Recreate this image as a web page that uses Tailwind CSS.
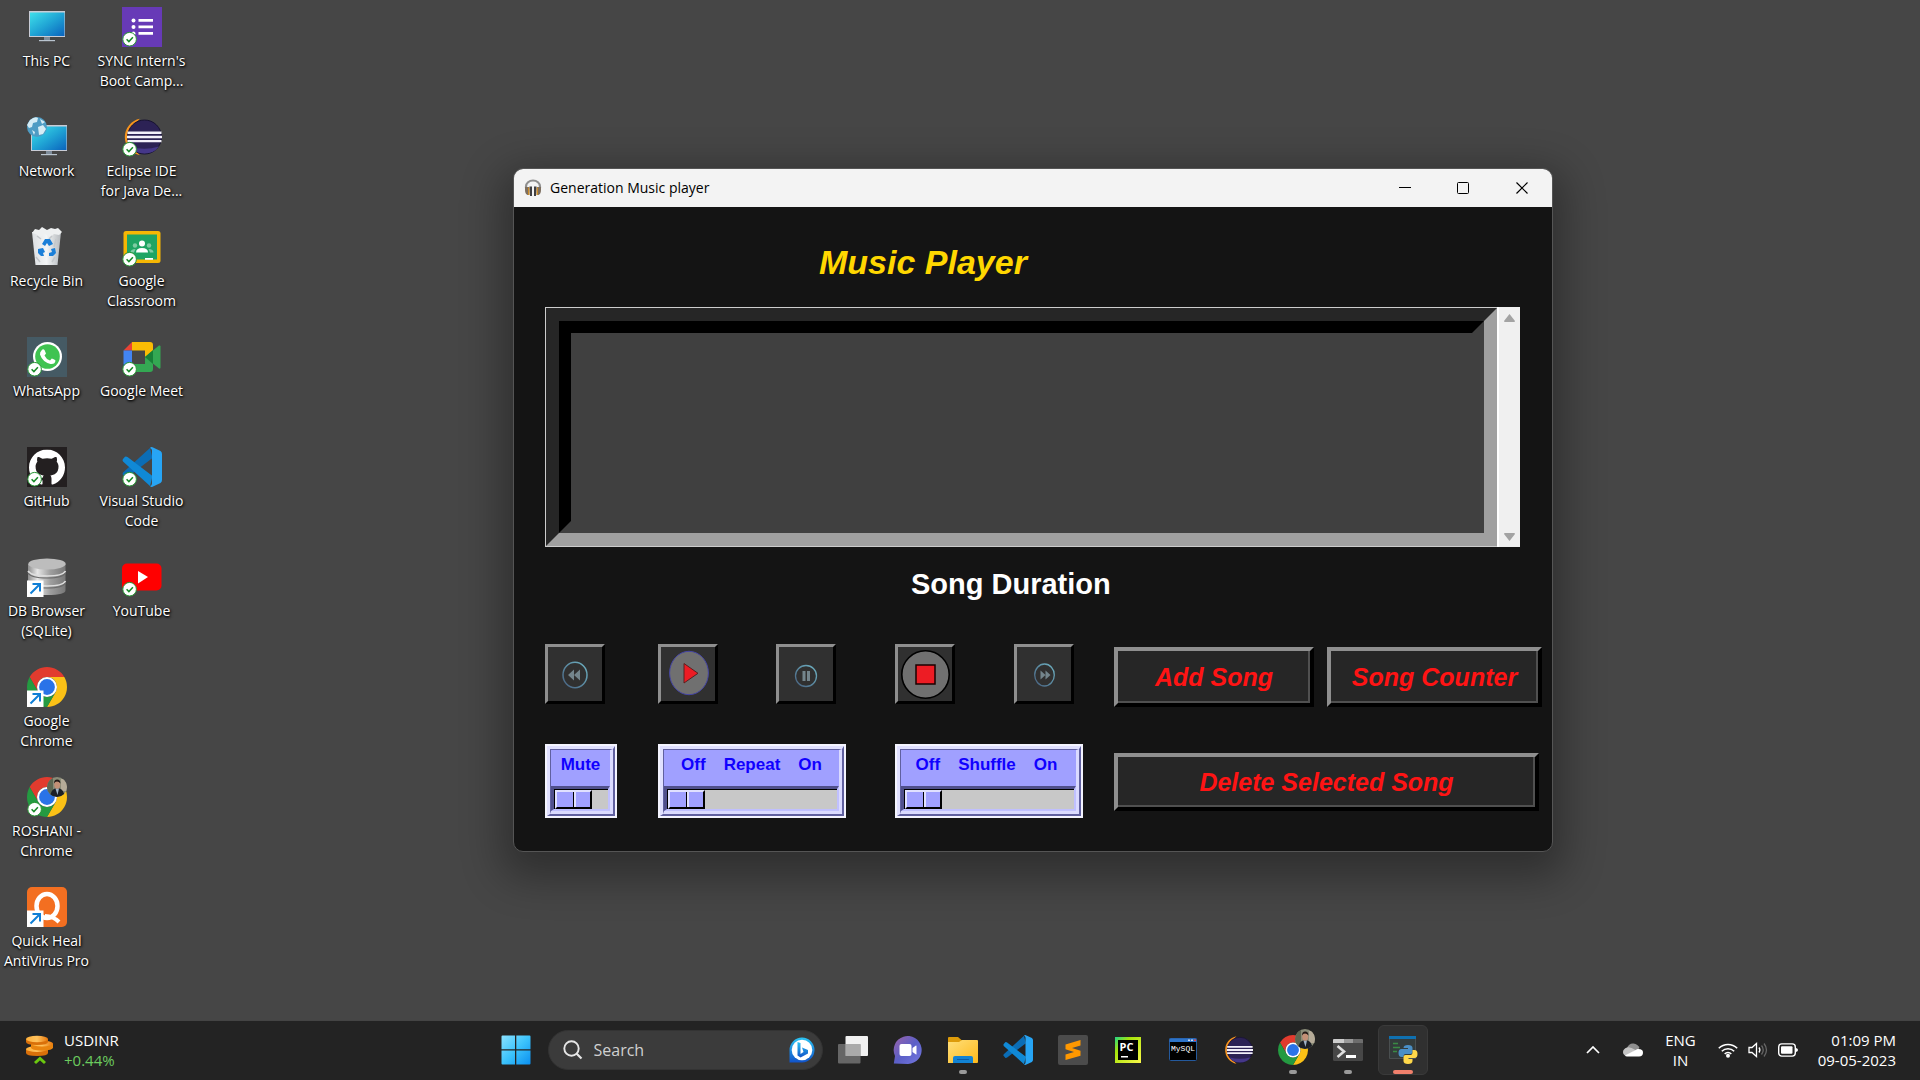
<!DOCTYPE html>
<html lang="en">
<head>
<meta charset="utf-8">
<title>Generation Music player</title>
<script src="https://cdn.jsdelivr.net/npm/@tailwindcss/browser@4"></script>
</head>
<body class="bg-[#464646] font-['Open_Sans','Noto_Sans',sans-serif] text-white">

<!-- Shared icon symbols -->
<svg class="absolute size-0" aria-hidden="true">
  <defs>
    <linearGradient id="screen" x1="0" y1="0" x2="1" y2="1"><stop offset="0" stop-color="#3fe0ea"/><stop offset=".5" stop-color="#20a5d5"/><stop offset="1" stop-color="#0a63bd"/></linearGradient>
    <linearGradient id="win" x1="0" y1="0" x2="1" y2="1"><stop offset="0" stop-color="#8be2ff"/><stop offset=".5" stop-color="#3cc3fb"/><stop offset="1" stop-color="#0a8ff0"/></linearGradient>
    <linearGradient id="bin" x1="0" x2="1"><stop offset="0" stop-color="#dcdfe2"/><stop offset=".5" stop-color="#f3f5f6"/><stop offset="1" stop-color="#b5b9bd"/></linearGradient>
    <linearGradient id="metal" x1="0" x2="1"><stop offset="0" stop-color="#8c8c8c"/><stop offset=".25" stop-color="#e6e6e6"/><stop offset=".6" stop-color="#9e9e9e"/><stop offset="1" stop-color="#777"/></linearGradient>
    <linearGradient id="folder" x1="0" y1="0" x2="1" y2="1"><stop offset="0" stop-color="#ffdf7a"/><stop offset="1" stop-color="#fdb91b"/></linearGradient>
    <linearGradient id="chat" x1="0" y1="0" x2="1" y2="1"><stop offset="0" stop-color="#9c63a8"/><stop offset=".5" stop-color="#5b5fc7"/><stop offset="1" stop-color="#7478e0"/></linearGradient>
    <linearGradient id="bing" x1="0" y1="0" x2="0" y2="1"><stop offset="0" stop-color="#2bc4f3"/><stop offset="1" stop-color="#1152c9"/></linearGradient>
    <linearGradient id="coin" x1="0" x2="1"><stop offset="0" stop-color="#ffb03a"/><stop offset=".5" stop-color="#ffc35e"/><stop offset="1" stop-color="#e8780c"/></linearGradient>
    <linearGradient id="teal" x1="1" y1="0" x2="0" y2="1"><stop offset="0" stop-color="#6fb4c4"/><stop offset="1" stop-color="#47607f"/></linearGradient>
    <linearGradient id="pyc" x1="0" y1="0" x2="1" y2="1"><stop offset="0" stop-color="#21d789"/><stop offset=".3" stop-color="#a5e40b"/><stop offset="1" stop-color="#fcf84a"/></linearGradient>
  </defs>
  <symbol id="ok" viewBox="0 0 40 40">
    <circle cx="7.6" cy="32.2" r="6.8" fill="#fff" stroke="#279634" stroke-width="1"/>
    <path d="M4.6 32.2l2.3 2.4 4-4.4" fill="none" stroke="#178a27" stroke-width="1.5"/>
  </symbol>
  <symbol id="link" viewBox="0 0 40 40">
    <path d="M0 23.500h16.500V40H0z" fill="#fff"/>
    <path d="M3.500 36.500L12 28M5.500 27h7.500v7.500" fill="none" stroke="#0f7fd6" stroke-width="2"/>
  </symbol>
  <symbol id="monitor" viewBox="0 0 40 40">
    <path d="M2 4h36v26H2z" fill="#c9ccd6"/><path d="M3 5.500h34.500V29H3z" fill="url(#screen)"/>
    <path d="M17 30h6v3h-6z" fill="#7e8c9a"/><path d="M12 33h16v1.200H12z" fill="#b9c4cf"/>
  </symbol>
  <symbol id="chrome" viewBox="0 0 48 48">
    <path d="M24 12H44.780A24 24 0 0 0 3.220 12L13.610 30A12 12 0 0 1 24 12Z" fill="#e23b2e"/>
    <path d="M34.390 30L24 48A24 24 0 0 0 44.780 12H24A12 12 0 0 1 34.390 30Z" fill="#fbc116"/>
    <path d="M13.610 30L3.220 12A24 24 0 0 0 24 48L34.390 30A12 12 0 0 1 13.610 30Z" fill="#249a41"/>
    <circle cx="24" cy="24" r="12" fill="#fff"/><circle cx="24" cy="24" r="9.500" fill="#2a73e8"/>
  </symbol>
  <symbol id="face" viewBox="0 0 20 20">
    <clipPath id="round"><circle cx="10" cy="10" r="10"/></clipPath>
    <g clip-path="url(#round)"><path d="M0 0h20v20H0z" fill="#8a8c78"/><path d="M0 0h6v20H0z" fill="#5d6651"/><path d="M14 2h6v12h-6z" fill="#b5ab98"/>
    <path d="M3 20Q4 12.500 8 11.500h4.500Q17 12.500 17.500 20z" fill="#1c2026"/><path d="M8.500 11.500h3.500L10.500 18z" fill="#9fb3c6"/>
    <ellipse cx="10.200" cy="7.500" rx="3" ry="4.200" fill="#c49076"/><path d="M7 6.500Q7 2.500 10.200 2.500T13.400 6.500Q12 4.600 10 4.600T7 6.500z" fill="#241a17"/></g>
  </symbol>
  <symbol id="vscode" viewBox="0 0 40 40">
    <path d="M28 1L1 25.500Q0 27 1 28L3 30.200Q4 31 5.500 30L30.500 11z" fill="#0b6db5"/>
    <path d="M28 39L1 14.500Q0 13 1 12L3 9.800Q4 9 5.500 10L30.500 29z" fill="#1089d6"/>
    <path d="M30.500.3L38.500 4Q40 5 40 7v26q0 2-1.500 3l-8 3.700Q29 40.300 28 39q2-.5 2-2.500v-33Q30 1.500 28 1q1-1.300 2.500-.7z" fill="#27a5f5"/>
  </symbol>
  <symbol id="eclipse" viewBox="0 0 40 40">
    <path d="M18 1.800A18.500 18.500 0 0 0 18 38.200 22 22 0 0 1 18 1.800z" fill="#f7941e"/>
    <path d="M17 2.500A18.300 18.300 0 0 0 17 37.500L10 30V10z" fill="#f7941e"/>
    <circle cx="22.500" cy="20" r="17" fill="#2c2255" stroke="#171231" stroke-width="1"/>
    <path d="M8 29.500Q22 34 37 29.500 32 36.500 22.500 36.500T8 29.500z" fill="#453788"/>
    <path d="M5.500 14.500h34v2.400h-34zM5 18.700h35v2.500H5zM5.500 22.900h34v2.400h-34z" fill="#f3f1fa"/>
  </symbol>
</svg>

<div class="flex min-h-screen flex-col">

  <!-- Desktop -->
  <main class="relative flex-1">
    <nav aria-label="Desktop" class="grid w-max grid-flow-col grid-rows-[repeat(9,110px)] gap-x-0.5 text-center text-sm leading-5 [text-shadow:0_1px_2px_#000,1px_1px_3px_#000]">
      <a href="#" class="flex w-[93px] flex-col items-center gap-1 pt-[7px]">
        <svg class="size-10" viewBox="0 0 40 40"><use href="#monitor"/></svg><span class="whitespace-nowrap">This PC</span></a>
      <a href="#" class="flex w-[93px] flex-col items-center gap-1 pt-[7px]">
        <svg class="size-10 overflow-visible" viewBox="0 0 40 40"><use href="#monitor" x="2" y="4" width="40" height="40"/><circle cx="10" cy="10" r="10" fill="#4e9cc4"/><path d="M3 3q5-4 8-2l-1 4-4 1-1 4-3 1-2-3zM11 10l5-2 3 4-3 5-4 1zM13 2l5 3-3 2zM5 13l3 2-1 3z" fill="#d5ecf5"/></svg><span class="whitespace-nowrap">Network</span></a>
      <a href="#" class="flex w-[93px] flex-col items-center gap-1 pt-[7px]">
        <svg class="size-10" viewBox="0 0 40 40"><path d="M5 5l29 0-3.500 33h-22z" fill="url(#bin)"/><path d="M5 6l3-4 4 1 3-3 5 3 4-2 4 1 3-1 4 4-3 3-5-1-4 3-5-3-5 3-4-3z" fill="#eef0f1"/><path d="M10 9l4 3M25 9l-3 3M29 12l-2 8M9 30l4 5M28 30l-3 5" stroke="#c4c8cb" stroke-width="1.500"/><path d="M15 17l3-5h5l3 5-4 2-2-3-2 3zM11 22l5-1 2 4-2 1 1 3h-3l-3-3zM22 29v-3l3-1-1-3 4-1 1 5-3 3z" fill="#1b7fd8"/></svg><span class="whitespace-nowrap">Recycle Bin</span></a>
      <a href="#" class="flex w-[93px] flex-col items-center gap-1 pt-[7px]">
        <svg class="size-10" viewBox="0 0 40 40"><path d="M0 0h40v40H0z" fill="#455a64"/><circle cx="20.500" cy="19.500" r="14.500" fill="#fff"/><circle cx="20.500" cy="19.500" r="12.300" fill="#3fc351"/><path d="M14.500 13.500q1.500-2 3-.5l1.500 3.500-1.500 2q1.500 3.500 5.500 5l1.800-2q3 1 3.700 2-.5 4-5 3.500-8-2-10.500-9.500-.2-2.500 1.500-4z" fill="#fff"/><use href="#ok"/></svg><span class="whitespace-nowrap">WhatsApp</span></a>
      <a href="#" class="flex w-[93px] flex-col items-center gap-1 pt-[7px]">
        <svg class="size-10" viewBox="0 0 40 40"><path d="M0 0h40v40H0z" fill="#231f20"/><svg x="2" y="2.500" width="36" height="36" viewBox="0 0 16 16"><path fill="#fff" d="M8 0C3.580 0 0 3.580 0 8c0 3.540 2.290 6.530 5.470 7.590.4.070.550-.170.550-.380 0-.190-.010-.820-.010-1.490-2.010.370-2.530-.490-2.690-.940-.090-.230-.480-.940-.820-1.130-.280-.150-.680-.520-.010-.530.630-.010 1.080.580 1.230.820.720 1.210 1.870.870 2.330.660.070-.520.280-.870.510-1.070-1.780-.2-3.640-.890-3.640-3.950 0-.870.310-1.590.820-2.150-.080-.2-.360-1.020.080-2.120 0 0 .670-.210 2.200.820.640-.180 1.320-.270 2-.270s1.360.090 2 .270c1.530-1.040 2.200-.820 2.200-.820.440 1.100.160 1.920.080 2.120.510.560.820 1.270.820 2.150 0 3.070-1.870 3.750-3.650 3.950.290.250.540.730.540 1.480 0 1.070-.010 1.930-.010 2.200 0 .210.150.460.550.380A8.010 8.010 0 0 0 16 8c0-4.420-3.580-8-8-8z"/></svg><use href="#ok"/></svg><span class="whitespace-nowrap">GitHub</span></a>
      <a href="#" class="flex w-[93px] flex-col items-center gap-1 pt-[7px]">
        <svg class="size-10" viewBox="0 0 40 40"><path d="M1 7v26q0 5 19 5t18.500-5V7z" fill="url(#metal)"/><ellipse cx="20" cy="7" rx="18.700" ry="5.500" fill="#bdbdbd"/><path d="M1 14q3 5 19 5t18.500-5M1 24q3 5 19 5t18.500-5" fill="none" stroke="#dedede" stroke-width="1.600"/><path d="M1 16q3 5 19 5t18.500-5M1 26q3 5 19 5t18.500-5" fill="none" stroke="#6b6b6b" stroke-width="1.200"/><use href="#link"/></svg><span>DB Browser (SQLite)</span></a>
      <a href="#" class="flex w-[93px] flex-col items-center gap-1 pt-[7px]">
        <svg class="size-10" viewBox="0 0 40 40"><use href="#chrome"/><use href="#link"/></svg><span>Google<br>Chrome</span></a>
      <a href="#" class="flex w-[93px] flex-col items-center gap-1 pt-[7px]">
        <svg class="size-10" viewBox="0 0 40 40"><use href="#chrome"/><use href="#face" x="20" y="0" width="20" height="20"/><use href="#ok"/></svg><span>ROSHANI -<br>Chrome</span></a>
      <a href="#" class="flex w-[93px] flex-col items-center gap-1 pt-[7px]">
        <svg class="size-10" viewBox="0 0 40 40"><rect width="40" height="40" rx="5" fill="#f36f21"/><ellipse cx="20" cy="19" rx="10.500" ry="12" fill="none" stroke="#fff" stroke-width="4.500"/><path d="M18 29q8 0 14 6" fill="none" stroke="#fff" stroke-width="4"/><use href="#link"/></svg><span class="whitespace-nowrap">Quick Heal<br>AntiVirus Pro</span></a>

      <a href="#" class="flex w-[93px] flex-col items-center gap-1 pt-[7px]">
        <svg class="size-10" viewBox="0 0 40 40"><path d="M0 0h40v40H0z" fill="#673ab7"/><path d="M16.500 12h14.500v2.800H16.500zM16.500 18.500h14.500v2.800H16.500zM16.500 25h14.500v2.800H16.500z" fill="#fff"/><circle cx="11.500" cy="13.500" r="2" fill="#fff"/><circle cx="11.500" cy="20" r="2" fill="#fff"/><circle cx="11.500" cy="26.500" r="2" fill="#fff"/><use href="#ok"/></svg><span class="whitespace-nowrap">SYNC Intern's<br>Boot Camp...</span></a>
      <a href="#" class="flex w-[93px] flex-col items-center gap-1 pt-[7px]">
        <svg class="size-10" viewBox="0 0 40 40"><use href="#eclipse"/><use href="#ok"/></svg><span class="whitespace-nowrap">Eclipse IDE<br>for Java De...</span></a>
      <a href="#" class="flex w-[93px] flex-col items-center gap-1 pt-[7px]">
        <svg class="size-10" viewBox="0 0 40 40"><rect x="1.500" y="4" width="37" height="32" rx="2.500" fill="#f6b704"/><path d="M5 7.500h30v25H5z" fill="#1fa463"/><circle cx="20" cy="16.500" r="3" fill="#fff"/><circle cx="13" cy="18.500" r="2.200" fill="#7fcba3"/><circle cx="27" cy="18.500" r="2.200" fill="#7fcba3"/><path d="M14 25.500q0-4.500 6-4.500t6 4.500z" fill="#fff"/><path d="M8.500 25.500q0-3.500 5-3.500l-1.500 3.500zM31.500 25.500q0-3.500-5-3.500l1.500 3.500z" fill="#7fcba3"/><path d="M23 31h8v1.800h-8z" fill="#fff"/><use href="#ok"/></svg><span>Google<br>Classroom</span></a>
      <a href="#" class="flex w-[93px] flex-col items-center gap-1 pt-[7px]">
        <svg class="size-10" viewBox="0 0 40 40"><path d="M10 5L1.500 13.500H10z" fill="#ea4335"/><path d="M10 5h18q3 0 3 3v9l-8 3v-6.500H10z" fill="#fbbc04"/><path d="M1.500 13.500H10V27H1.500z" fill="#4285f4"/><path d="M1.500 27H10v8H4q-2.500 0-2.500-3z" fill="#1967d2"/><path d="M10 27h13v-7l8 5v7q0 3-3 3H10z" fill="#34a853"/><path d="M23 20l14-11.500q1.500-.5 1.500 1v21q0 1.500-1.500 1z" fill="#34a853"/><path d="M23 20l8-7v14z" fill="#188038"/><use href="#ok"/></svg><span class="whitespace-nowrap">Google Meet</span></a>
      <a href="#" class="flex w-[93px] flex-col items-center gap-1 pt-[7px]">
        <svg class="size-10" viewBox="0 0 40 40"><use href="#vscode"/><use href="#ok"/></svg><span class="whitespace-nowrap">Visual Studio<br>Code</span></a>
      <a href="#" class="flex w-[93px] flex-col items-center gap-1 pt-[7px]">
        <svg class="size-10" viewBox="0 0 40 40"><rect y="6.500" width="39.500" height="27" rx="5" fill="#f00"/><path d="M16 14v12.500L26 20z" fill="#fff"/><use href="#ok"/></svg><span>YouTube</span></a>
    </nav>

    <!-- Music player window -->
    <section aria-label="Generation Music player" class="absolute top-[168px] right-[367px] left-[513px] flex flex-col overflow-hidden rounded-[10px] border border-[#555] bg-[#141414] font-['Liberation_Sans',Arial,sans-serif] font-bold shadow-[0_14px_40px_12px_rgba(0,0,0,0.32)]">
      <header class="flex h-[38px] items-center bg-[#f3f3f3] pl-2.5 font-['Open_Sans','Noto_Sans',sans-serif] font-normal text-black">
        <svg class="size-[18px]" viewBox="0 0 18 18"><path d="M2 9V7.500a7 6 0 0 1 14 0V9" fill="none" stroke="#8f8f8f" stroke-width="2.200"/><path d="M1 8h4v8H3.500Q1 15 1 11zM17 8h-4v8h1.500Q17 15 17 11z" fill="#7d6f60"/><path d="M4 8.500h1.500V16H4zM12.500 8.500H14V16h-1.500z" fill="#c98a28"/><path d="M5.500 7.500H8V17H6zM12.500 7.500H10V17h2z" fill="#3f3f42"/></svg>
        <h1 class="ml-2 text-sm">Generation Music player</h1>
        <div class="ml-auto flex h-full">
          <button type="button" aria-label="Minimize" class="grid w-[58px] place-items-center"><svg class="size-3" viewBox="0 0 12 12"><path d="M0 5.500h12" stroke="#000"/></svg></button>
          <button type="button" aria-label="Maximize" class="grid w-[58px] place-items-center"><svg class="size-3" viewBox="0 0 12 12"><rect x=".5" y=".5" width="11" height="11" rx="1" fill="none" stroke="#000"/></svg></button>
          <button type="button" aria-label="Close" class="grid w-[60px] place-items-center"><svg class="size-3" viewBox="0 0 12 12"><path d="M.5.5l11 11M11.500.5l-11 11" stroke="#000" stroke-width="1.200"/></svg></button>
        </div>
      </header>

      <div class="flex flex-col pt-[35px] pr-8 pl-[31px]">
        <h2 class="pl-[274px] text-[34px] leading-10 text-[#ffd700] italic">Music Player</h2>

        <!-- Playlist -->
        <div class="mt-[25px] flex h-60">
          <div class="flex flex-1 border border-r-0 border-[#ccc]">
            <div class="flex flex-1 border-[13px] border-t-[#262626] border-r-[#a0a0a0] border-b-[#a0a0a0] border-l-[#262626] bg-[#404040]">
              <div role="listbox" aria-label="Playlist" class="flex-1 border-[12px] border-t-black border-r-[#404040] border-b-[#404040] border-l-black"></div>
            </div>
          </div>
          <div class="flex w-[23px] flex-col items-center justify-between border-l-2 border-white bg-[#f0f0f0] pt-[7px] pb-1.5">
            <svg class="h-2 w-[11px]" viewBox="0 0 11 8"><path d="M5.500 0L11 7q0 1-1 1H1Q0 8 0 7z" fill="#a3a3a3"/></svg>
            <svg class="h-2 w-[11px]" viewBox="0 0 11 8"><path d="M5.500 8L11 1q0-1-1-1H1Q0 0 0 1z" fill="#a3a3a3"/></svg>
          </div>
        </div>

        <p class="mt-[19px] pl-[366px] text-[29px] leading-9">Song Duration</p>
      </div>

      <!-- Playback controls -->
      <div class="mt-[42px] grid grid-cols-[113px_118px_119px_119px_100px_1fr] items-start gap-y-[37px] pr-[10px] pb-[33px] pl-[31px]">
        <button type="button" aria-label="Previous" class="size-[60px] border-[3px] border-t-[#8f8f8f] border-r-black border-b-black border-l-[#8f8f8f] bg-[#303030]">
          <svg class="size-[54px]" viewBox="0 0 54 54"><ellipse cx="27" cy="28" rx="12" ry="12.700" fill="none" stroke="url(#teal)" stroke-width="1.500"/><path d="M26 22.500v11L20 28zM32 22.500v11L26 28z" fill="#74858c"/></svg></button>
        <button type="button" aria-label="Play" class="size-[60px] border-[3px] border-t-[#8f8f8f] border-r-black border-b-black border-l-[#8f8f8f] bg-[#303030]">
          <svg class="size-[54px]" viewBox="0 0 54 54"><ellipse cx="28" cy="26" rx="19.400" ry="21.700" fill="#707070" stroke="#4545a5" stroke-width="1"/><path d="M23 16.500v19.500L37 26.300z" fill="#ed1c24" stroke="#5a2020" stroke-width="1"/></svg></button>
        <button type="button" aria-label="Pause" class="size-[60px] border-[3px] border-t-[#8f8f8f] border-r-black border-b-black border-l-[#8f8f8f] bg-[#303030]">
          <svg class="size-[54px]" viewBox="0 0 54 54"><circle cx="27" cy="29" r="10.500" fill="none" stroke="url(#teal)" stroke-width="1.300"/><path d="M23.500 24h3v10h-3zM28 24h3v10h-3z" fill="#74858c"/></svg></button>
        <button type="button" aria-label="Stop" class="size-[60px] border-[3px] border-t-[#8f8f8f] border-r-black border-b-black border-l-[#8f8f8f] bg-[#303030]">
          <svg class="size-[54px]" viewBox="0 0 54 54"><circle cx="27.500" cy="27.500" r="23.700" fill="#707070" stroke="#000" stroke-width="1.600"/><path d="M18 18h19v19H18z" fill="#ed1c24" stroke="#1a0000" stroke-width="1.500"/></svg></button>
        <button type="button" aria-label="Next" class="size-[60px] border-[3px] border-t-[#8f8f8f] border-r-black border-b-black border-l-[#8f8f8f] bg-[#303030]">
          <svg class="size-[54px]" viewBox="0 0 54 54"><ellipse cx="27.500" cy="28" rx="9.800" ry="11" fill="none" stroke="url(#teal)" stroke-width="1.300"/><path d="M23.500 23.500v9l5-4.500zM28.500 23.500v9l5-4.500z" fill="#74858c"/></svg></button>
        <div class="flex gap-[13px] pt-[3px] text-[25px] leading-none text-[#ff1414] italic">
          <button type="button" class="h-[60px] w-[200px] border-4 border-t-[#8f8f8f] border-r-black border-b-black border-l-[#8f8f8f] bg-[#262626] shadow-[inset_-2px_-2px_0_#505050]">Add Song</button>
          <button type="button" class="h-[60px] w-[215px] border-4 border-t-[#8f8f8f] border-r-black border-b-black border-l-[#8f8f8f] bg-[#262626] shadow-[inset_-2px_-2px_0_#505050]">Song Counter</button>
        </div>

        <div class="w-[72px] border-2 border-[#f4f4ff] bg-[#a0a0ff] text-[17px] leading-5 text-[#1000ff]">
          <div class="border-t-[3px] border-r-2 border-b-2 border-l-[3px] border-t-[#e0e0ff] border-r-[#6060a0] border-b-[#6060a0] border-l-[#e0e0ff]">
            <div class="border-t border-r-[3px] border-b-[3px] border-l border-t-[#6060a0] border-r-[#dadaff] border-b-[#dadaff] border-l-[#6060a0]">
              <label for="mute" class="block h-9 pt-[5px] text-center">Mute</label>
              <div class="border-t-[3px] border-r-2 border-b-2 border-l-[3px] border-t-[#50508c] border-r-[#c0c0ff] border-b-[#c0c0ff] border-l-[#50508c]">
                <input id="mute" type="range" min="0" max="1" value="0" class="block h-5 w-full appearance-none border-t border-l border-black bg-[#c8c8c8] [&::-webkit-slider-thumb]:h-[19px] [&::-webkit-slider-thumb]:w-[37px] [&::-webkit-slider-thumb]:appearance-none [&::-webkit-slider-thumb]:border-2 [&::-webkit-slider-thumb]:border-t-[#e0e0ff] [&::-webkit-slider-thumb]:border-r-black [&::-webkit-slider-thumb]:border-b-black [&::-webkit-slider-thumb]:border-l-[#e0e0ff] [&::-webkit-slider-thumb]:bg-[linear-gradient(90deg,#a0a0ff_16px,#000_16px,#000_17px,#e0e0ff_17px,#e0e0ff_19px,#a0a0ff_19px)]">
              </div>
            </div>
          </div>
        </div>
        <div class="col-span-2 w-[188px] border-2 border-[#f4f4ff] bg-[#a0a0ff] text-[17px] leading-5 text-[#1000ff]">
          <div class="border-t-[3px] border-r-2 border-b-2 border-l-[3px] border-t-[#e0e0ff] border-r-[#6060a0] border-b-[#6060a0] border-l-[#e0e0ff]">
            <div class="border-t border-r-[3px] border-b-[3px] border-l border-t-[#6060a0] border-r-[#dadaff] border-b-[#dadaff] border-l-[#6060a0]">
              <label for="repeat" class="flex h-9 justify-center gap-[18px] pt-[5px]"><span>Off</span><span>Repeat</span><span>On</span></label>
              <div class="border-t-[3px] border-r-2 border-b-2 border-l-[3px] border-t-[#50508c] border-r-[#c0c0ff] border-b-[#c0c0ff] border-l-[#50508c]">
                <input id="repeat" type="range" min="0" max="1" value="0" class="block h-5 w-full appearance-none border-t border-l border-black bg-[#c8c8c8] [&::-webkit-slider-thumb]:h-[19px] [&::-webkit-slider-thumb]:w-[37px] [&::-webkit-slider-thumb]:appearance-none [&::-webkit-slider-thumb]:border-2 [&::-webkit-slider-thumb]:border-t-[#e0e0ff] [&::-webkit-slider-thumb]:border-r-black [&::-webkit-slider-thumb]:border-b-black [&::-webkit-slider-thumb]:border-l-[#e0e0ff] [&::-webkit-slider-thumb]:bg-[linear-gradient(90deg,#a0a0ff_16px,#000_16px,#000_17px,#e0e0ff_17px,#e0e0ff_19px,#a0a0ff_19px)]">
              </div>
            </div>
          </div>
        </div>
        <div class="col-span-2 w-[188px] border-2 border-[#f4f4ff] bg-[#a0a0ff] text-[17px] leading-5 text-[#1000ff]">
          <div class="border-t-[3px] border-r-2 border-b-2 border-l-[3px] border-t-[#e0e0ff] border-r-[#6060a0] border-b-[#6060a0] border-l-[#e0e0ff]">
            <div class="border-t border-r-[3px] border-b-[3px] border-l border-t-[#6060a0] border-r-[#dadaff] border-b-[#dadaff] border-l-[#6060a0]">
              <label for="shuffle" class="flex h-9 justify-center gap-[18px] pt-[5px] pr-1"><span>Off</span><span>Shuffle</span><span>On</span></label>
              <div class="border-t-[3px] border-r-2 border-b-2 border-l-[3px] border-t-[#50508c] border-r-[#c0c0ff] border-b-[#c0c0ff] border-l-[#50508c]">
                <input id="shuffle" type="range" min="0" max="1" value="0" class="block h-5 w-full appearance-none border-t border-l border-black bg-[#c8c8c8] [&::-webkit-slider-thumb]:h-[19px] [&::-webkit-slider-thumb]:w-[37px] [&::-webkit-slider-thumb]:appearance-none [&::-webkit-slider-thumb]:border-2 [&::-webkit-slider-thumb]:border-t-[#e0e0ff] [&::-webkit-slider-thumb]:border-r-black [&::-webkit-slider-thumb]:border-b-black [&::-webkit-slider-thumb]:border-l-[#e0e0ff] [&::-webkit-slider-thumb]:bg-[linear-gradient(90deg,#a0a0ff_16px,#000_16px,#000_17px,#e0e0ff_17px,#e0e0ff_19px,#a0a0ff_19px)]">
              </div>
            </div>
          </div>
        </div>
        <div class="pt-[9px] pr-[3px]">
          <button type="button" class="h-[58px] w-full border-4 border-t-[#8f8f8f] border-r-black border-b-black border-l-[#8f8f8f] bg-[#262626] px-8 text-[25px] leading-none text-[#ff1414] italic shadow-[inset_-2px_-2px_0_#505050]">Delete Selected Song</button>
        </div>
      </div>
    </section>
  </main>

  <!-- Taskbar -->
  <footer class="grid h-[60px] grid-cols-[1fr_auto_1fr] items-center border-t border-[#444] bg-[#232323] pb-0.5 text-[15px] leading-5">
    <button type="button" class="flex items-center gap-[11px] pl-[25px] text-left">
      <svg class="h-[30px] w-7" viewBox="0 0 28 30"><path d="M1 14v4q0 3 11 3t11-3v-4z" fill="#d9700a"/><ellipse cx="12" cy="14" rx="11" ry="3" fill="url(#coin)"/><path d="M6 8.500v4q0 3 11 3t11-3v-4z" fill="#e8840f"/><ellipse cx="17" cy="8.500" rx="11" ry="3" fill="url(#coin)"/><path d="M1 4v3q0 3 11 3t11-3V4z" fill="#d9700a"/><ellipse cx="12" cy="4" rx="11" ry="3.200" fill="url(#coin)"/><path d="M10 28l5-4.500 5 4.500" fill="none" stroke="#6bc80f" stroke-width="3"/></svg>
      <span><span class="block">USDINR</span><span class="block text-[#6ccb5f]">+0.44%</span></span>
    </button>

    <div class="flex items-center pr-0.5">
      <button type="button" aria-label="Start" class="mr-[7px] grid size-[50px] place-items-center"><svg class="size-[30px]" viewBox="0 0 30 30"><path d="M.5 1.500Q.5.500 1.500.500H14V14.300H.500zM15.300.500H28.500Q29.500.500 29.500 1.500V14.300H15.300zM.500 15.600H14V29.500H1.500Q.5 29.500.5 28.500zM15.300 15.600H29.500V28.500Q29.500 29.500 28.500 29.500H15.300z" fill="url(#win)"/></svg></button>
      <label class="mr-[5px] flex h-10 w-[275px] items-center rounded-full border border-[#333] bg-[#3b3b3b] pr-[7px] pl-3.5">
        <svg class="size-5" viewBox="0 0 20 20"><circle cx="8.500" cy="8.500" r="7.200" fill="none" stroke="#e6e6e6" stroke-width="1.900"/><path d="M13.500 13.500l5 5" stroke="#e6e6e6" stroke-width="2.200"/></svg>
        <input type="search" aria-label="Search" placeholder="Search" class="ml-[11px] w-0 flex-1 bg-transparent text-base outline-none placeholder:text-[#d0d0d0]">
        <svg class="size-[26px]" viewBox="0 0 26 26"><path d="M.5 25.500V13A12.500 12.500 0 1 1 13 25.500z" fill="url(#bing)"/><circle cx="13" cy="13" r="10.300" fill="#fff"/><path d="M8.500 5l3 1v11l3-2-1.500-4.500 6 2.500v3.500L11.500 20.500l-3-2z" fill="url(#bing)"/></svg>
      </label>
      <div class="flex items-center gap-[5px]">
        <button type="button" aria-label="Task view" class="grid size-[50px] place-items-center"><svg class="size-[30px]" viewBox="0 0 30 30"><rect x="7.500" y="1" width="22.500" height="20" rx="1" fill="#f1f1f1"/><rect y="9" width="22.500" height="19.500" rx="1" fill="#777" fill-opacity=".8"/><path d="M7.500 9h15v12h-15z" fill="#aaa"/></svg></button>
        <button type="button" aria-label="Chat" class="grid size-[50px] place-items-center"><svg class="size-[30px]" viewBox="0 0 30 30"><path d="M.8 28.500L2 21A14 14 0 1 1 15 29z" fill="url(#chat)"/><rect x="6.500" y="9" width="12" height="12" rx="2" fill="#fff"/><path d="M19.500 13l3.500-2.500q.500 0 .5.500v8q0 .5-.5.500L19.500 17z" fill="#fff"/></svg></button>
        <button type="button" aria-label="File Explorer" class="relative grid size-[50px] place-items-center"><svg class="size-[30px]" viewBox="0 0 30 30"><path d="M0 3q0-1 1-1h9l4 3.500V10H0z" fill="#dd9b0a"/><path d="M0 7h11l3-2h15q1 0 1 1v21q0 1-1 1H0z" fill="url(#folder)"/><path d="M5 28v-5q0-2 2-2h16q2 0 2 2v5z" fill="#1283d4"/><path d="M9 24.500h12" stroke="#0a5ca8" stroke-width="1"/></svg><span class="absolute bottom-px h-1 w-2 rounded-full bg-[#9a9a9a]"></span></button>
        <button type="button" aria-label="Visual Studio Code" class="grid size-[50px] place-items-center"><svg class="size-[30px]" viewBox="0 0 40 40"><use href="#vscode"/></svg></button>
        <button type="button" aria-label="Sublime Text" class="grid size-[50px] place-items-center"><svg class="size-[30px]" viewBox="0 0 30 30"><rect width="30" height="30" rx="2" fill="#4b4b4b"/><path d="M22.500 5v5.500L14 13l8.500 2.800v5L7.500 25v-5.500l8.500-2.500-8.500-2.800V9.500z" fill="#ff9800"/></svg></button>
        <button type="button" aria-label="PyCharm" class="grid size-[50px] place-items-center"><svg class="size-[30px]" viewBox="0 0 30 30"><path d="M2 2h26v26H2z" fill="url(#pyc)"/><path d="M5 5h20v20H5z" fill="#000"/><path d="M8 21h7v1.500H8z" fill="#fff"/><text x="6.500" y="15.500" font-size="11" font-weight="700" fill="#fff">PC</text></svg></button>
        <button type="button" aria-label="MySQL" class="grid size-[50px] place-items-center"><svg class="size-[30px]" viewBox="0 0 30 30"><rect x="1.500" y="3.500" width="27" height="22" rx="1" fill="#000" stroke="#24599c"/><path d="M1.500 3.500h27V7h-27z" fill="#2d73c8"/><path d="M20 4.500h2v1.500h-2zM23 4.500h2v1.500h-2z" fill="#cde"/><path d="M26 4.500h2v1.500h-2z" fill="#e44"/><text x="3" y="15.500" font-size="8" font-family="Liberation Mono, monospace" fill="#fff">MySQL</text></svg></button>
        <button type="button" aria-label="Eclipse" class="grid size-[50px] place-items-center"><svg class="size-[30px]" viewBox="0 0 40 40"><use href="#eclipse"/></svg></button>
        <button type="button" aria-label="Google Chrome" class="relative grid size-[50px] place-items-center"><svg class="size-[30px] overflow-visible" viewBox="0 0 30 30"><use href="#chrome"/><use href="#face" x="17" y="-6" width="20" height="20"/></svg><span class="absolute bottom-px h-1 w-2 rounded-full bg-[#9a9a9a]"></span></button>
        <button type="button" aria-label="Terminal" class="relative grid size-[50px] place-items-center"><svg class="size-[30px]" viewBox="0 0 30 30"><rect y="4" width="30" height="22" rx="1.500" fill="#474747"/><path d="M0 8V5q0-1 1-1h10v4z" fill="#ccc"/><path d="M11 4h9v4h-9z" fill="#999"/><path d="M20 4h9q1 0 1 1v3H20z" fill="#6d6d6d"/><path d="M4.500 11l6.500 5.500L4.500 22" fill="none" stroke="#dedede" stroke-width="2.600"/><path d="M13 20h10v3H13z" fill="#fff"/></svg><span class="absolute bottom-px h-1 w-2 rounded-full bg-[#9a9a9a]"></span></button>
        <button type="button" aria-label="Generation Music player" class="relative grid size-[50px] place-items-center rounded-md border border-[#3a3a3a] bg-[#303030]"><svg class="size-[30px]" viewBox="0 0 30 30"><path d="M1.500 1.500h26v22h-26z" fill="#333b3b" stroke="#4a4f50"/><path d="M1 1h27v3H1z" fill="#0f70b0"/><path d="M5 8.500h5M5 12.500h7M5 16.500h4" stroke="#3a8a44" stroke-width="1.300"/><path d="M15.500 13q0-3 4.500-3t4.500 3v4q0 2-2 2h-5q-2 0-2 3h-2q-3 0-3-4t3-4h6.500v-1z" fill="#4a8fc6"/><path d="M24.500 15h2q3 0 3 4t-3 4h-6v1h4v2q0 3-4.500 3t-4.500-3v-4q0-2 2-2h5q2 0 2-3z" fill="#ffd84a"/></svg><span class="absolute bottom-0 h-1 w-5 rounded-full bg-[#f0806c]"></span></button>
      </div>
    </div>

    <div class="flex items-center justify-end pr-6">
      <button type="button" aria-label="Show hidden icons" class="mr-[23px]"><svg class="h-2 w-3.5" viewBox="0 0 14 8"><path d="M1 7l6-6 6 6" fill="none" stroke="#fff" stroke-width="1.700"/></svg></button>
      <button type="button" aria-label="OneDrive" class="mr-[22px]"><svg class="h-3.5 w-5" viewBox="0 0 20 14"><path d="M4 5Q6 0 10.500.500T16.500 5l-4 4z" fill="#8f8f8f"/><path d="M3.500 13Q0 12 0 9t4-4.500q3-1 8.500 2.500L5 13z" fill="#c5c5c5"/><path d="M2 12.500L14.500 6q5.500-.5 5.500 3.500T16 13.500H4q-1.500 0-2-1z" fill="#fff"/></svg></button>
      <button type="button" class="mr-[22px] text-center">ENG<br>IN</button>
      <button type="button" aria-label="Network, volume and battery" class="mr-5 flex items-center gap-2.5">
        <svg class="h-4 w-5" viewBox="0 0 20 16"><g fill="none" stroke="#fff" stroke-width="1.600"><path d="M.8 6.300a13 13 0 0 1 18.400 0"/><path d="M3.800 9.300a8.800 8.800 0 0 1 12.400 0"/><path d="M6.700 12a4.700 4.700 0 0 1 6.600 0"/></g><circle cx="10" cy="13.800" r="2" fill="#fff"/></svg>
        <svg class="h-4 w-5" viewBox="0 0 20 16"><path d="M1 5.500h3l4.500-4v13L4 10.500H1z" fill="none" stroke="#fff" stroke-width="1.300"/><path d="M11 5.500q1.800 2.500 0 5" fill="none" stroke="#fff" stroke-width="1.300"/><path d="M13.500 3.500q3.500 4.500 0 9M16 1.500q5 6.500 0 13" fill="none" stroke="#666" stroke-width="1.300"/></svg>
        <svg class="h-4 w-5" viewBox="0 0 20 16"><rect x=".7" y="1.900" width="16.600" height="12.200" rx="3" fill="none" stroke="#fff" stroke-width="1.400"/><rect x="3" y="4.200" width="11.500" height="7.600" rx="1" fill="#fff"/><path d="M18 6q2 .5 2 2t-2 2z" fill="#fff"/></svg>
      </button>
      <button type="button" class="text-right">01:09 PM<br>09-05-2023</button>
    </div>
  </footer>
</div>
</body>
</html>
